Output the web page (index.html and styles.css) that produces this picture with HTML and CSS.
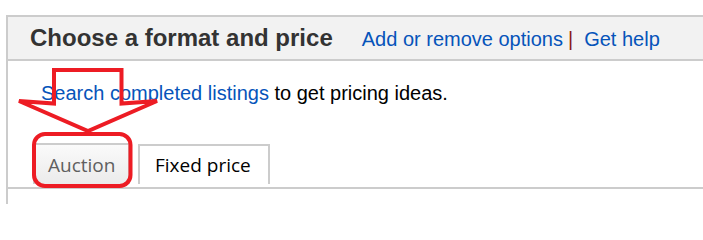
FILE: index.html
```html
<!DOCTYPE html>
<html>
<head>
<meta charset="utf-8">
<link rel="stylesheet" href="styles.css">
</head>
<body>
<div class="panel">
  <div class="header">
    <h2 class="title">Choose a format and price</h2>
    <div class="links">
      <a class="link" href="#">Add or remove options</a><span class="sep">|</span><a class="link" href="#">Get help</a>
    </div>
  </div>
  <div class="content">
    <p class="hint"><a class="link" href="#">Search completed listings</a> to get pricing ideas.</p>
    <div class="tabs">
      <div class="tab tab-auction">Auction</div>
      <div class="tab tab-fixed">Fixed price</div>
    </div>
  </div>
</div>
<svg class="annot" width="703" height="204" viewBox="0 0 703 204" xmlns="http://www.w3.org/2000/svg">
  <path d="M54 103.5 L54 70 L121.5 70 L121.5 103.5 L157 101 L88 131 L19 101 Z" fill="none" stroke="#ed1c24" stroke-width="4" stroke-linejoin="miter"/>
  <rect x="34" y="134" width="96.5" height="52" rx="11" ry="11" fill="none" stroke="#ed1c24" stroke-width="4"/>
</svg>
</body>
</html>
```
FILE: styles.css
```css
html, body {
  margin: 0;
  padding: 0;
  background: #fff;
}
body {
  width: 703px;
  height: 204px;
  overflow: hidden;
  position: relative;
  font-family: "Liberation Sans", Arial, sans-serif;
}
.panel {
  margin-top: 15px;
  margin-left: 6px;
  border-top: 2px solid #cccccc;
  border-left: 2px solid #cccccc;
  height: 200px;
}
.header {
  display: flex;
  align-items: baseline;
  height: 42px;
  line-height: 42px;
  background: #f2f2f2;
  border-bottom: 2px solid #cccccc;
  padding-left: 22px;
  white-space: nowrap;
}
.title {
  margin: 0;
  font-size: 24px;
  font-weight: bold;
  color: #333333;
}
.links {
  margin-left: 29px;
  font-size: 20px;
}
.link {
  color: #0654ba;
  text-decoration: none;
}
.sep {
  color: #8b1a1a;
  margin-left: 5px;
  margin-right: 11px;
}
.content {
  padding-top: 21px;
}
.hint {
  margin: 0 0 0 33px;
  font-size: 20px;
  line-height: 23px;
  color: #000000;
}
.tabs {
  display: flex;
  align-items: flex-end;
  gap: 8px;
  margin-top: 38px;
  padding-left: 25px;
  padding-bottom: 3px;
  border-bottom: 2px solid #cccccc;
}
.tab {
  font-family: "Open Sans", "Noto Sans", sans-serif;
  font-size: 19px;
  border: 2px solid #cccccc;
  border-bottom: none;
  box-sizing: border-box;
  display: flex;
  align-items: center;
}
.tab-auction {
  width: 97px;
  height: 41px;
  padding-left: 13px;
  color: #5f5f5f;
  background: linear-gradient(#fafafa, #ebebeb);
}
.tab-fixed {
  width: 132px;
  height: 40px;
  padding-left: 15px;
  color: #000000;
  background: #ffffff;
}
.annot {
  position: absolute;
  left: 0;
  top: 0;
  pointer-events: none;
}
```
